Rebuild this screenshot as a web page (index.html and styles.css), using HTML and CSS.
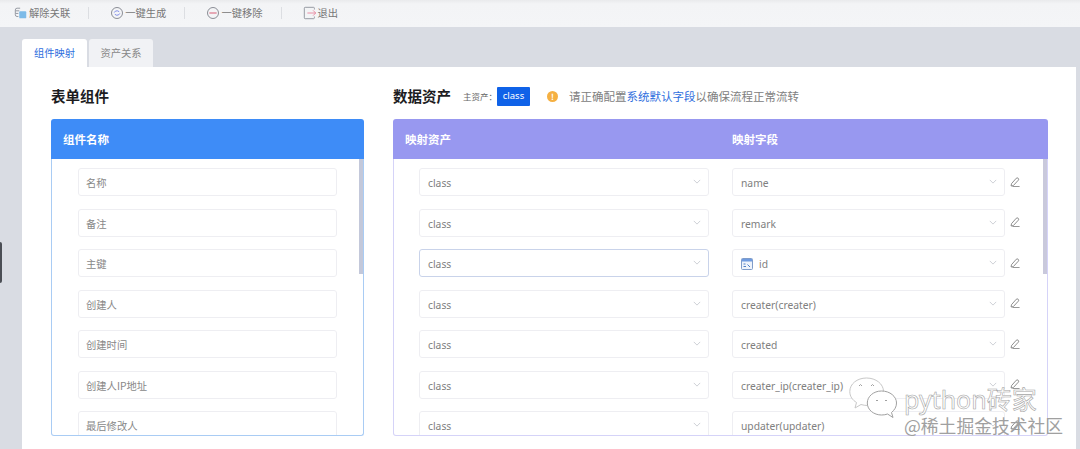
FILE: index.html
```html
<!DOCTYPE html>
<html lang="zh">
<head>
<meta charset="utf-8">
<title>组件映射</title>
<link rel="stylesheet" href="styles.css">
</head>
<body>
<div class="toolbar">
  <div class="tool">
    <svg class="ti" viewBox="0 0 16 16"><path d="M7 2.500H3.500Q1.500 2.500 1.500 4.500V10Q1.500 12 3.500 12H5M2 5.500H6M2 8.500H5" fill="none" stroke="#8a8f98" stroke-width="1"/><rect x="6" y="6" width="8" height="8" rx="1" fill="#7dbbe8"/></svg>
    <span>解除关联</span></div>
  <i class="sep"></i>
  <div class="tool">
    <svg class="ti" viewBox="0 0 16 16"><circle cx="8" cy="8" r="6.300" fill="none" stroke="#7b7f88" stroke-width="1"/><path d="M4.800 7.500Q6 5 8.500 5.500L10.500 6.500M11.200 8.500Q10 11 7.500 10.500L5.500 9.500" fill="none" stroke="#6f7ee6" stroke-width="1"/></svg>
    <span>一键生成</span></div>
  <i class="sep"></i>
  <div class="tool">
    <svg class="ti" viewBox="0 0 16 16"><circle cx="8" cy="8" r="6.300" fill="none" stroke="#7b7f88" stroke-width="1"/><path d="M3.800 8H12.200" stroke="#d9637a" stroke-width="1.200"/></svg>
    <span>一键移除</span></div>
  <i class="sep"></i>
  <div class="tool">
    <svg class="ti" viewBox="0 0 16 16"><path d="M13 4V2.500Q13 1.500 12 1.500H2.500Q1.500 1.500 1.500 2.500V13.500Q1.500 14.500 2.500 14.500H12Q13 14.500 13 13.500V12" fill="none" stroke="#8a8f98" stroke-width="1"/><path d="M5 8H14.500M11.500 5L14.500 8L11.500 11" fill="none" stroke="#e8819a" stroke-width="1"/></svg>
    <span>退出</span></div>
</div>

<div class="handle"></div>

<main class="main">
  <div class="tabs">
    <div class="tab active">组件映射</div>
    <div class="tab">资产关系</div>
  </div>
  <div class="card">
    <section class="left">
      <h2 class="title">表单组件</h2>
      <div class="panel">
        <div class="phead blue">组件名称</div>
        <div class="pbody lbody">
          <div class="field">名称</div>
          <div class="field">备注</div>
          <div class="field">主键</div>
          <div class="field">创建人</div>
          <div class="field">创建时间</div>
          <div class="field">创建人IP地址</div>
          <div class="field">最后修改人</div>
          <div class="scroll sc-blue"></div>
        </div>
      </div>
    </section>

    <section class="right">
      <div class="titlebar">
        <h2 class="title">数据资产</h2>
        <span class="mainlabel">主资产：</span>
        <span class="badge">class</span>
        <span class="warn">!</span>
        <span class="notice">请正确配置<a class="lnk">系统默认字段</a>以确保流程正常流转</span>
      </div>
      <div class="panel">
        <div class="phead purple"><span class="h1">映射资产</span><span>映射字段</span></div>
        <div class="pbody rbody">
          <div class="row"><div class="sel s1">class<svg class="chev" viewBox="0 0 10 6"><path d="M1 1L5 5L9 1"/></svg></div><div class="sel s2">name<svg class="chev" viewBox="0 0 10 6"><path d="M1 1L5 5L9 1"/></svg></div><svg class="pen" viewBox="0 0 12 12"><path d="M1.800 8L7.500 1.500Q8.500 .5 9.800 1.500Q11 2.700 10 3.800L4 10.300L1.300 10.800ZM3 11.500H11.500"/></svg></div>
          <div class="row"><div class="sel s1">class<svg class="chev" viewBox="0 0 10 6"><path d="M1 1L5 5L9 1"/></svg></div><div class="sel s2">remark<svg class="chev" viewBox="0 0 10 6"><path d="M1 1L5 5L9 1"/></svg></div><svg class="pen" viewBox="0 0 12 12"><path d="M1.800 8L7.500 1.500Q8.500 .5 9.800 1.500Q11 2.700 10 3.800L4 10.300L1.300 10.800ZM3 11.500H11.500"/></svg></div>
          <div class="row"><div class="sel s1 focus">class<svg class="chev" viewBox="0 0 10 6"><path d="M1 1L5 5L9 1"/></svg></div><div class="sel s2"><svg class="idic" viewBox="0 0 12 12"><rect x=".5" y=".5" width="11" height="11" rx="1" fill="#eef3fb" stroke="#7f9cc9"/><rect x="1" y="1" width="10" height="2.500" fill="#6f9be0"/><path d="M6.500 6.500L9 9M2.500 6H4.500M2.500 8.500H5" stroke="#4f7fc4" fill="none"/></svg>id<svg class="chev" viewBox="0 0 10 6"><path d="M1 1L5 5L9 1"/></svg></div><svg class="pen" viewBox="0 0 12 12"><path d="M1.800 8L7.500 1.500Q8.500 .5 9.800 1.500Q11 2.700 10 3.800L4 10.300L1.300 10.800ZM3 11.500H11.500"/></svg></div>
          <div class="row"><div class="sel s1">class<svg class="chev" viewBox="0 0 10 6"><path d="M1 1L5 5L9 1"/></svg></div><div class="sel s2">creater(creater)<svg class="chev" viewBox="0 0 10 6"><path d="M1 1L5 5L9 1"/></svg></div><svg class="pen" viewBox="0 0 12 12"><path d="M1.800 8L7.500 1.500Q8.500 .5 9.800 1.500Q11 2.700 10 3.800L4 10.300L1.300 10.800ZM3 11.500H11.500"/></svg></div>
          <div class="row"><div class="sel s1">class<svg class="chev" viewBox="0 0 10 6"><path d="M1 1L5 5L9 1"/></svg></div><div class="sel s2">created<svg class="chev" viewBox="0 0 10 6"><path d="M1 1L5 5L9 1"/></svg></div><svg class="pen" viewBox="0 0 12 12"><path d="M1.800 8L7.500 1.500Q8.500 .5 9.800 1.500Q11 2.700 10 3.800L4 10.300L1.300 10.800ZM3 11.500H11.500"/></svg></div>
          <div class="row"><div class="sel s1">class<svg class="chev" viewBox="0 0 10 6"><path d="M1 1L5 5L9 1"/></svg></div><div class="sel s2">creater_ip(creater_ip)<svg class="chev" viewBox="0 0 10 6"><path d="M1 1L5 5L9 1"/></svg></div><svg class="pen" viewBox="0 0 12 12"><path d="M1.800 8L7.500 1.500Q8.500 .5 9.800 1.500Q11 2.700 10 3.800L4 10.300L1.300 10.800ZM3 11.500H11.500"/></svg></div>
          <div class="row"><div class="sel s1">class<svg class="chev" viewBox="0 0 10 6"><path d="M1 1L5 5L9 1"/></svg></div><div class="sel s2">updater(updater)<svg class="chev" viewBox="0 0 10 6"><path d="M1 1L5 5L9 1"/></svg></div><svg class="pen" viewBox="0 0 12 12"><path d="M1.800 8L7.500 1.500Q8.500 .5 9.800 1.500Q11 2.700 10 3.800L4 10.300L1.300 10.800ZM3 11.500H11.500"/></svg></div>
          <div class="scroll sc-purple"></div>
        </div>
      </div>
    </section>
  </div>
</main>

<div class="wm">
  <svg class="wm-logo" viewBox="0 0 48 42"><path class="b1" d="M17.500 1C8 1 .8 7 .8 14.500C.8 19.500 3.500 23 7.500 25.500L6 31L12 27.500Q15 28.500 19 28.500C28 28.500 34.500 22 34.500 14.500C34.500 7 27 1 17.500 1Z"/><path class="b2" d="M32.500 14C24.500 14 18.300 19.500 18.300 26C18.300 33 25 38 32.500 38Q36 38 38.500 37L44 40.500L42.500 35.500C45.500 33 47.500 30 47.500 26C47.500 19.500 41 14 32.500 14Z"/><path class="eye" d="M10 9L11.500 7.500L13 9M22 9L23.500 7.500L25 9M27 23.500H29M36 23.500H38"/></svg>
  <span class="wm-a">python砖家</span>
  <span class="wm-b">@稀土掘金技术社区</span>
</div>
</body>
</html>
```
FILE: styles.css
```css
* { box-sizing: border-box; }
html, body { margin: 0; height: 449px; overflow: hidden; }
body {
  position: relative;
  background: #d9dce3;
  font-family: "Noto Sans CJK SC", "Noto Sans", sans-serif;
  color: #666;
}
.toolbar {
  height: 27px;
  padding: 0 0 2px 14px;
  background: linear-gradient(#e9eaec 0, #f3f4f6 4px, #f4f5f7 100%);
  display: flex;
  align-items: center;
  font-size: 10.3px;
  color: #777;
}
.tool { display: flex; align-items: center; gap: 1px; white-space: nowrap; }
.ti { width: 14px; height: 14px; flex: none; }
.sep { width: 1px; height: 12px; background: #dcdee2; margin: 0 21px 0 18px; }
.handle {
  position: absolute;
  left: 0; top: 242px;
  width: 2px; height: 41px;
  background: #4b4e55;
  border-radius: 0 2px 2px 0;
}
.main { padding: 12px 4px 0 22px; }
.tabs { display: flex; gap: 2px; height: 28px; }
.tab {
  width: 64px;
  background: #f1f2f5;
  border-radius: 3px 3px 0 0;
  font-size: 10.3px;
  line-height: 27px;
  text-align: center;
  color: #888;
}
.tab.active { width: 65px; background: #fff; color: #2f6fde; }
.card {
  background: #fff;
  height: 382px;
  padding: 0 29px;
  display: flex;
  gap: 29px;
}
.left { width: 313px; flex: none; }
.right { width: 655px; flex: none; }
.title {
  margin: 0;
  font-size: 14.5px;
  font-weight: 700;
  color: #1d1d1f;
  line-height: 21px;
}
.left > .title { padding: 18px 0 13px; height: 52px; }
.titlebar {
  height: 52px;
  padding-top: 18px;
  display: flex;
  align-items: flex-start;
}
.mainlabel { font-size: 8.5px; line-height: 22px; margin-left: 12px; color: #666; width: 34px; white-space: nowrap; }
.badge {
  width: 33px; height: 19px;
  margin-top: 2px;
  background: #0f62e8;
  color: #fff;
  border-radius: 1px;
  font-family: "Noto Sans", sans-serif;
  font-size: 9.5px;
  line-height: 18px;
  text-align: center;
}
.warn {
  width: 11px; height: 11px;
  margin: 6px 0 0 17px;
  border-radius: 50%;
  background: #f5b042;
  color: #fff;
  font-size: 8px;
  font-weight: 700;
  line-height: 11px;
  text-align: center;
}
.notice { font-size: 11.5px; line-height: 22px; margin-left: 11px; color: #808080; white-space: nowrap; }
.lnk { color: #2f6fde; }
.panel {
  height: 317px;
  display: flex;
  flex-direction: column;
}
.phead {
  height: 40px;
  flex: none;
  color: #fff;
  font-size: 11.5px;
  font-weight: 700;
  line-height: 40px;
  padding-left: 12px;
  display: flex;
  border-radius: 3px 3px 0 0;
}
.blue { background: #3e8cf7; }
.purple { background: #9898f0; }
.h1 { width: 327px; }
.pbody {
  flex: 1;
  min-height: 0;
  position: relative;
  overflow: hidden;
  padding-top: 9px;
  border: 1px solid #a9ccf4;
  border-top: 0;
  border-radius: 0 0 3px 3px;
}
.lbody { padding-left: 26px; }
.rbody { padding-left: 25px; border-color: #d5d3f8; }
.field {
  width: 259px; height: 28px;
  margin-bottom: 12.5px;
  border: 1px solid #eeeef2;
  border-radius: 3px;
  font-size: 10.3px;
  line-height: 28px;
  padding-left: 7px;
  color: #888;
}
.row { display: flex; align-items: center; height: 28px; margin-bottom: 12.5px; }
.sel {
  height: 28px;
  border: 1px solid #eeeef2;
  border-radius: 3px;
  font-family: "Noto Sans", sans-serif;
  font-size: 10.3px;
  padding: 2px 0 0 8px;
  color: #808080;
  display: flex;
  align-items: center;
  position: relative;
}
.s1 { width: 290px; margin-right: 23px; }
.s2 { width: 273px; }
.focus { border-color: #c9d3ea; }
.chev {
  position: absolute;
  right: 7px; top: 10px;
  width: 8px; height: 5px;
  fill: none;
  stroke: #c2c5cb;
  stroke-width: 1;
}
.pen {
  width: 10px; height: 10px;
  margin: 0 0 1px 5px;
  fill: none;
  stroke: #777;
  stroke-width: 1;
  flex: none;
}
.idic { width: 12px; height: 12px; margin-right: 6px; flex: none; }
.scroll { position: absolute; top: 0; right: 0; width: 4px; height: 115px; }
.sc-blue { background: #c3c8da; }
.sc-purple { background: #c9c9dc; }
.wm {
  position: absolute;
  left: 849px; top: 377px;
  width: 231px; height: 60px;
  pointer-events: none;
}
.wm-logo { position: absolute; left: 0; top: 0; width: 48px; height: 42px; }
.b1 { fill: rgba(255,255,255,.85); stroke: #c8c8c8; stroke-width: 1; }
.b2 { fill: #fff; stroke: #a0a0a0; stroke-width: 1; }
.eye { fill: none; stroke: #a0a0a0; stroke-width: 1; }
.wm-a {
  position: absolute; left: 55px; top: 9px;
  font-size: 25px; line-height: 26px;
  font-family: "Noto Sans", "Noto Sans CJK SC", sans-serif;
  color: #fff;
  white-space: nowrap;
  -webkit-text-stroke: .6px #a5a5a5;
}
.wm-b {
  position: absolute; left: 55px; top: 39px;
  font-size: 17.8px; line-height: 19px;
  color: #a0a0a0;
  white-space: nowrap;
}
```
